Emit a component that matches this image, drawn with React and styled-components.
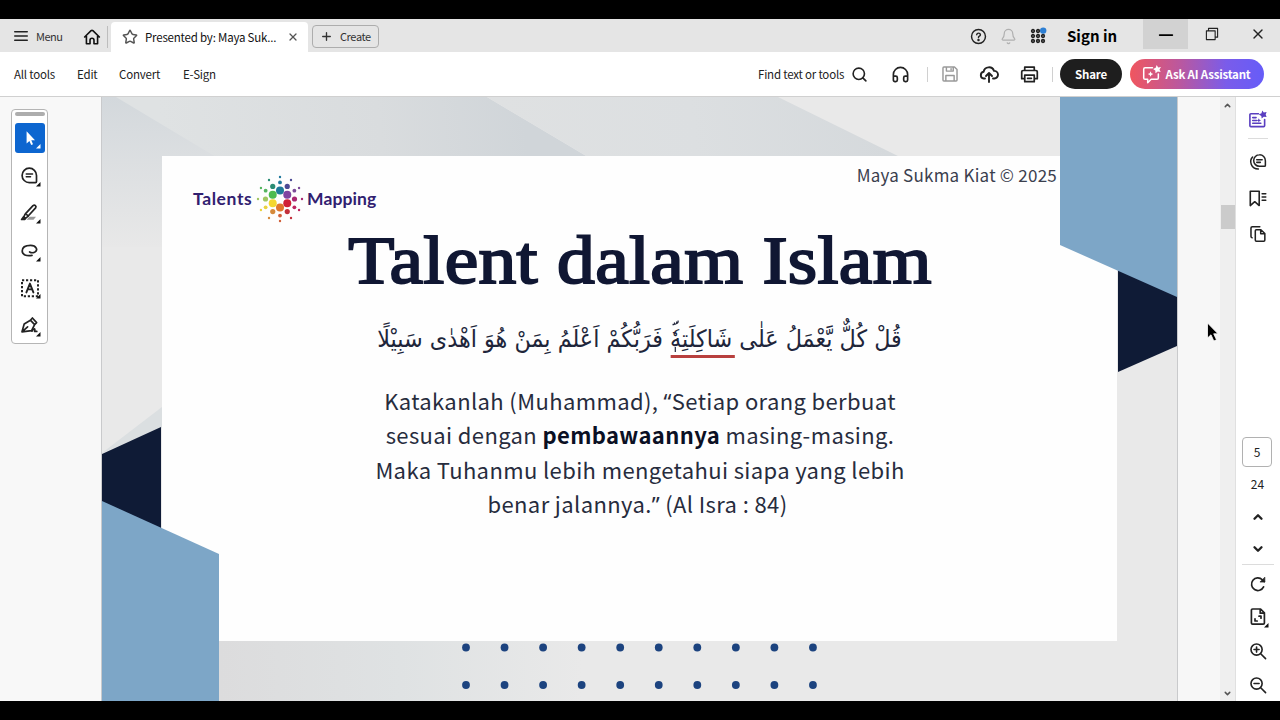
import React from 'react'
import styled, { createGlobalStyle, css } from 'styled-components'
import { Star, X, Plus, Bell, Search, Headphones, ChevronUp, ChevronDown } from 'lucide-react'

const GlobalStyle = createGlobalStyle`
    * {
        box-sizing: border-box;
    }
    body {
        margin: 0;
        background: #000;
        font-family: "Noto Sans CJK SC", "Noto Sans", sans-serif;
        color: #222;
    }
    svg {
        display: block;
        flex-shrink: 0;
        overflow: visible;
    }
`

const center = css`
    display: flex;
    align-items: center;
    justify-content: center;
`

const Screen = styled.div`
    width: 1280px;
    height: 720px;
    padding: 19px 0;
    background: #000;
    overflow: hidden;
`
const Window = styled.div`
    display: flex;
    flex-direction: column;
    height: 682px;
    background: #fff;
`
const TitleBar = styled.header`
    display: flex;
    height: 33px;
    background: #e5e5e5;
`
const MenuButton = styled.div`
    display: flex;
    align-items: center;
    gap: 8px;
    width: 80px;
    padding: 1px 0 0 14px;
    font-size: 11px;
    line-height: 16px;
    letter-spacing: -0.5px;
    color: #333;
`
const HomeButton = styled.div`
    display: flex;
    align-items: center;
    width: 28px;
    height: 22px;
    margin-top: 7px;
    padding-left: 3px;
    border-right: 1px solid #bdbdbd;
`
const DocTab = styled.div`
    display: flex;
    align-items: center;
    width: 197px;
    margin: 3px 0 0 3px;
    padding: 0 9px 0 11px;
    border-radius: 4px 4px 0 0;
    background: #fff;
`
const TabTitle = styled.div`
    flex: 1;
    margin-left: 7px;
    font-size: 11.5px;
    line-height: 18px;
    letter-spacing: -0.2px;
    white-space: nowrap;
    color: #111;
`
const CreateButton = styled.div`
    display: flex;
    align-items: center;
    gap: 7px;
    width: 67px;
    height: 23px;
    margin: 6px 0 0 4px;
    padding: 0 0 1px 7px;
    border: 1px solid #adadad;
    border-radius: 4px;
    font-size: 11px;
    line-height: 16px;
    letter-spacing: -0.4px;
    color: #333;
`
const TitleActions = styled.div`
    display: flex;
    align-items: center;
    margin-left: auto;
    padding-top: 1px;
`
const IconCell = styled.div`
    ${center};
    width: ${props => props.$width || 30}px;
    height: 100%;
`
const SignIn = styled.div`
    width: 90px;
    padding-left: 14px;
    font-size: 15px;
    font-weight: 700;
    line-height: 22px;
    color: #000;
    white-space: nowrap;
`
const WindowButton = styled.div`
    ${center};
    width: ${props => props.$width}px;
    height: 30px;
    background: ${props => (props.$active ? '#d2d2d2' : 'transparent')};
`
const Toolbar = styled.nav`
    display: flex;
    align-items: center;
    height: 45px;
    padding-left: 14px;
    border-bottom: 1px solid #d0d0d0;
    font-size: 11.5px;
    line-height: 18px;
    letter-spacing: -0.2px;
`
const ToolLink = styled.div`
    width: ${props => props.$width}px;
    white-space: nowrap;
`
const ToolbarRight = styled.div`
    display: flex;
    align-items: center;
    height: 44px;
    margin-left: auto;
    padding-right: 16px;
`
const Divider = styled.div`
    width: 1px;
    height: 15px;
    background: #d0d0d0;
`
const ShareButton = styled.div`
    ${center};
    width: 62px;
    height: 30px;
    margin-left: 7px;
    border-radius: 15px;
    background: #1e1e1e;
    color: #fff;
    font-weight: 700;
`
const AssistantButton = styled.div`
    ${center};
    gap: 5px;
    width: 134px;
    height: 30px;
    margin-left: 8px;
    padding-right: 2px;
    border-radius: 15px;
    background: linear-gradient(90deg, #f0565f 0%, #b958a0 38%, #7a5cea 72%, #665cf8 100%);
    color: #fff;
    font-weight: 700;
    white-space: nowrap;
`
const Workspace = styled.main`
    display: flex;
    height: 604px;
    background: #f7f7f7;
`
const LeftGutter = styled.aside`
    width: 102px;
    padding: 12px 0 0 11px;
    border-right: 1px solid #c9cacc;
    background: #f8f8f8;
`
const ToolPalette = styled.div`
    display: flex;
    flex-direction: column;
    align-items: center;
    width: 37px;
    height: 235px;
    border: 1px solid #b5b5b5;
    border-radius: 4px;
    background: #fff;
`
const Grip = styled.div`
    flex-shrink: 0;
    width: 30px;
    height: 4px;
    margin: 2px 0 7px;
    border-radius: 2px;
    background: #adadad;
`
const PaletteTool = styled.div`
    ${center};
    flex-shrink: 0;
    width: 30px;
    height: 30px;
    margin-bottom: 7.6px;
    border-radius: 3px;
    background: ${props => (props.$active ? '#0d66d0' : 'transparent')};
`
const Page = styled.section`
    position: relative;
    width: 1076px;
    height: 604px;
    padding: 59px 60px 0;
    overflow: hidden;
    border-right: 1px solid #c9cacc;
    background: #e9e9e9;
`
const Backdrop = styled.svg`
    position: absolute;
    top: 0;
    left: 0;
`
const Slide = styled.article`
    position: relative;
    width: 955px;
    height: 485px;
    background: #fefefe;
`
const SlideHeader = styled.div`
    display: flex;
    justify-content: space-between;
    height: 74px;
    padding: 0 60px 0 31px;
`
const Brand = styled.div`
    display: flex;
    align-items: center;
    height: 48px;
    margin-top: 19px;
    font-family: "Lato", sans-serif;
    font-size: 17.5px;
    font-weight: 700;
    line-height: 22px;
    color: #312070;
`
const BrandWord = styled.span`
    width: ${props => props.$width}px;
    padding: 0 0 1px ${props => props.$indent || 0}px;
    letter-spacing: ${props => props.$spacing}px;
    white-space: nowrap;
`
const Copyright = styled.div`
    margin-top: 6px;
    font-size: 17px;
    line-height: 26px;
    letter-spacing: 0.24px;
    color: #3b404e;
    white-space: nowrap;
`
const SlideTitle = styled.h1`
    height: 76px;
    margin: 0;
    font-family: "Liberation Serif", serif;
    font-size: 68px;
    font-weight: 400;
    line-height: 60px;
    letter-spacing: 0.3px;
    text-indent: 1px;
    text-align: center;
    white-space: nowrap;
    color: #101733;
    -webkit-text-stroke: 2px #101733;
    transform: scaleX(1.11);
`
const Verse = styled.p`
    height: 60px;
    margin: 0;
    font-family: "DejaVu Sans", sans-serif;
    font-size: 24px;
    line-height: 66px;
    text-align: center;
    white-space: nowrap;
    color: #20253a;
    transform: scaleX(0.93);
`
const Marked = styled.span`
    position: relative;
    &::after {
        content: "";
        position: absolute;
        left: 1px;
        right: -3px;
        bottom: -5px;
        height: 3px;
        background: #b8403e;
    }
`
const PauseMark = styled.svg`
    position: absolute;
    left: 0;
    bottom: 0;
`
const Translation = styled.p`
    margin: 17px 0 0;
    font-size: 22px;
    line-height: 34.3px;
    letter-spacing: 0.38px;
    text-align: center;
    color: #272c3d;
    b {
        color: #0b1024;
    }
`
const Line = styled.span`
    display: block;
    padding-left: 1px;
    padding-right: ${props => props.$inset || 0}px;
    white-space: nowrap;
`
const Quote = styled.span`
    font-family: "Noto Sans", sans-serif;
    line-height: 1;
`
const RightGutter = styled.div`
    flex: 1;
    background: #f7f7f7;
`
const ScrollTrack = styled.div`
    display: flex;
    flex-direction: column;
    align-items: center;
    width: 15px;
    padding: 4px 0 3px;
    background: #efefef;
`
const Thumb = styled.div`
    width: 14px;
    height: 24px;
    margin: 95px 0 auto;
    background: #cbcbcb;
`
const Rail = styled.aside`
    display: flex;
    flex-direction: column;
    align-items: center;
    width: 45px;
    padding: 4px 1px 0 0;
    border-left: 1px solid #e0e0e0;
    background: #fff;
    font-size: 12px;
    line-height: 18px;
`
const RailItem = styled.div`
    ${center};
    flex-shrink: 0;
    width: 100%;
    height: ${props => props.$height}px;
`
const RailDivider = styled.div`
    flex-shrink: 0;
    width: ${props => props.$width}px;
    height: 1px;
    background: #dcdcdc;
`
const PageInput = styled.div`
    ${center};
    flex-shrink: 0;
    width: 30px;
    height: 30px;
    margin: 181px 1px 0 0;
    border: 1px solid #b1b1b1;
    border-radius: 4px;
`
const Pointer = styled.svg`
    position: absolute;
    top: 322px;
    left: 1206px;
`

const Icon = ({ size = 18, width = 1.7, color = '#222', children, ...rest }) => (
    <svg width={size} height={size} viewBox="0 0 20 20" fill="none" stroke={color} strokeWidth={width} strokeLinecap="round" strokeLinejoin="round" {...rest}>
        {children}
    </svg>
)

const Corner = ({ color = '#111' }) => <path d="M20.5 16V20.5H16Z" fill={color} stroke="none" />

const MenuIcon = () => (
    <Icon size={14} width={2}><path d="M1 4h18M1 10h18M1 16h18" /></Icon>
)
const HomeIcon = () => (
    <Icon size={18} width={1.8} color="#111">
        <path d="M1.8 10 9 3Q10 2.2 11 3L18.2 10M3.8 9v8.5H7.8V13.5Q7.8 11.4 10 11.4T12.2 13.5v4H16.2V9" />
    </Icon>
)
const HelpIcon = () => (
    <Icon size={17} width={1.7}>
        <circle cx="10" cy="10" r="8.2" />
        <path d="M7.9 7.9Q8.2 6 10.1 6T12.2 7.8Q12.2 9 11 9.7T10 11.3" />
        <circle cx="10" cy="14" r=".6" fill="#222" />
    </Icon>
)
const AppsIcon = () => (
    <svg width="18" height="18" viewBox="0 0 18 18">
        {[4, 9, 14].map(y => [4, 9, 14].map(x => (
            <circle key={`${x}-${y}`} cx={x} cy={y} r="1.5" fill="#666" stroke="#222" strokeWidth="1.3" />
        )))}
        <circle cx="14.2" cy="3.6" r="3.2" fill="#2d7fd3" />
    </svg>
)
const MinimizeIcon = () => (
    <Icon size={14} width={2.6} color="#000"><path d="M1 11.5h18" /></Icon>
)
const RestoreIcon = () => (
    <Icon size={14} width={1.6}>
        <path d="M2 5.5h12.5V18H2ZM5 5V2h13v12.5h-3" />
    </Icon>
)
const SaveIcon = () => (
    <Icon size={18} width={1.6} color="#999">
        <path d="M2.2 3.2q0-1 1-1H15l2.8 2.8v11.8q0 1-1 1H3.2q-1 0-1-1ZM6 2.4v4.4h7.6V2.4M5.4 17.6v-6h9.2v6M11.2 4v1.2" />
    </Icon>
)
const CloudIcon = () => (
    <Icon size={20} width={1.9}>
        <path d="M6 14.5H4.7A3.4 3.4 0 0 1 4.6 7.8 5.4 5.4 0 0 1 15 6.9a3.8 3.8 0 0 1 .4 7.6H14M10 18V9.5M7 12l3-3 3 3" />
    </Icon>
)
const PrintIcon = () => (
    <Icon size={19} width={1.8}>
        <path d="M5 5.4V2.2h10v3.2M5 14.4H1.8V7.2q0-1.4 1.4-1.4h13.6q1.4 0 1.4 1.4v7.2H15M5 10.6h10v7H5ZM8 14h4" />
    </Icon>
)
const AssistantIcon = () => (
    <Icon size={19} width={1.6} color="#fff">
        <path d="M11 3H3.2Q1.8 3 1.8 4.4v9.2Q1.8 15 3.2 15H6v3.6L9.6 15h6.2q1.4 0 1.4-1.4V9.5" />
        <path d="m15.5 0 1.5 2.6 3-.4-1.6 2.6 1.2 2.6-3-.6-2.4 2-.2-3-2.4-1.6 2.8-1.2ZM9 6.6l.9 2 2 .9-2 .9-.9 2-.9-2-2-.9 2-.9Z" fill="#fff" stroke="none" />
    </Icon>
)
const PointerToolIcon = () => (
    <Icon size={20}>
        <path d="M6.6 3.2V15.6L9.4 13 11.2 17 13 16.2 11.3 12.3H15Z" fill="#fff" stroke="none" />
        <Corner color="#fff" />
    </Icon>
)
const CommentIcon = () => (
    <Icon size={20}>
        <path d="M9.3 2.2a7.2 7.2 0 0 1 7.2 7.2v6.2q0 1-1 1H9.3a7.2 7.2 0 0 1 0-14.4Z" />
        <path d="M6.2 8h6.4M6.2 10.8h4.4" strokeWidth="1.4" />
        <Corner />
    </Icon>
)
const HighlightIcon = () => (
    <Icon size={20}>
        <path d="M9.5 13.8h6.5l-2.5 3H6.5Z" fill="#999" stroke="none" />
        <path d="M5.6 10.6 13 2.6q1.3-1 2.4 0t.2 2.3L8.2 13Z" />
        <path d="M5 11.3 3.8 14 5.3 15.4 8 13.4" />
        <path d="M1.6 16.4l2-2.6 1.8 1.8-.8.8Z" fill="#111" />
        <Corner />
    </Icon>
)
const LassoIcon = () => (
    <Icon size={20}>
        <path d="M9.6 11Q12 12.4 14.6 11.2C18.4 9.2 16.4 4.4 10.6 4.4 5 4.4 2.2 6.8 2.2 10c0 3.6 4 5.4 9.8 4.4" />
        <Corner />
    </Icon>
)
const TextBoxIcon = () => (
    <Icon size={20}>
        <path d="M2 2.2h16v16H2Z" strokeDasharray="2.2 1.8" strokeLinecap="butt" strokeWidth="2" />
        <path d="m6.4 14.4 3.5-8.8L13.4 14.4M7.8 11.4h4.2" strokeWidth="1.9" />
        <Corner />
    </Icon>
)
const SignIcon = () => (
    <Icon size={20}>
        <path d="M2 15.8 4.2 8 10.4 4.2 14.6 8.6 11.6 14.6ZM2 15.8l5.6-5M10.4 4.2 12.4 2l4.2 4.6-2 2" />
        <path d="M12 15.2q1.2-2.4 2.2-2.4t.4 2.6h2.2" />
        <Corner />
    </Icon>
)
const AiPanelIcon = () => (
    <Icon size={19} color="#5a3fc0">
        <path d="M11 4H3Q2 4 2 5v11.5q0 1 1 1h13.5q1 0 1-1V10" />
        <path d="M5 8h3.5M5 11h4M5 14h8.5" />
        <path d="m15 .6 1.6 2 3-.6-1 2.8 1 2.6-3-.4-2.2 2-.4-2.8-2.6-1.4 2.8-1.4ZM11.4 8.6l.7 1.7 1.7.7-1.7.7-.7 1.7-.7-1.7-1.7-.7 1.7-.7Z" fill="#5a3fc0" stroke="none" />
    </Icon>
)
const CommentsPanelIcon = () => (
    <Icon size={18}>
        <path d="M11.6 2a6.4 6.4 0 0 1 6.6 6.6v5.2q0 1-1 1h-5.6a6.4 6.4 0 0 1 0-12.8ZM8.6 7.4h6M8.6 10.4h4" />
        <path d="M4 4.5C-.2 9 2.2 17.5 10.4 17.8" />
    </Icon>
)
const BookmarkIcon = () => (
    <Icon size={19}>
        <path d="M2.4 2.4h9.4v15L7.1 13.4l-4.7 4Z" />
        <path d="M14.8 5h4M14.8 8.4h4M14.8 11.8h4" strokeWidth="1.4" />
    </Icon>
)
const PagesIcon = () => (
    <Icon size={18}>
        <path d="M8.2 5.2h5L17.6 9.4v7.4q0 1.2-1.2 1.2H8.2Q7 18 7 16.8V6.4Q7 5.2 8.2 5.2ZM13 5.4v4.2h4.4" />
        <path d="M3.4 14.2Q2.2 14 2.2 12.8V3.4q0-1.4 1.4-1.4H12" />
    </Icon>
)
const RotateIcon = () => (
    <Icon size={18} width={1.9}>
        <path d="M16.2 13.2A7 7 0 1 1 14.8 5.3L17 7.4" />
        <path d="M17.6 2.8v5h-5Z" fill="#222" strokeWidth=".8" />
    </Icon>
)
const FitPageIcon = () => (
    <Icon size={20}>
        <path d="M4.6 2h8L16.4 5.8V16q0 1.2-1.2 1.2H4.6Q3.4 17.2 3.4 16V3.2Q3.4 2 4.6 2ZM12.2 2.2v4h4M11 9.2h2v2M7 11.8v2.2h2.2" />
        <Corner />
    </Icon>
)
const ZoomIcon = ({ plus }) => (
    <Icon size={18} width={1.8}>
        <circle cx="8.4" cy="8.4" r="6.2" />
        <path d="M13 13l5.4 5.4M5.6 8.4h5.6" />
        {plus && <path d="M8.4 5.6v5.6" />}
    </Icon>
)

const innerColors = ['#1d7a9a', '#7f45a0', '#d02038', '#e0762c', '#f4d72e', '#4dbb50']
// clockwise from twelve o'clock, 30 degrees apart
const outerColors = ['#20789c', '#4c4a94', '#7b4a98', '#a82872', '#bd2560', '#c3303c', '#d0603a', '#d58a3c', '#ead23e', '#a0c661', '#55b560', '#2a8c74']

const polar = (deg, r) => ({
    cx: 24 + r * Math.sin((deg * Math.PI) / 180),
    cy: 24 - r * Math.cos((deg * Math.PI) / 180),
})

const BrandMark = () => (
    <svg width="48" height="48" viewBox="0 0 48 48">
        {innerColors.map((color, i) => <circle key={color} {...polar(i * 60, 8.4)} r="4" fill={color} />)}
        {outerColors.map((color, i) => (
            <React.Fragment key={color}>
                <circle {...polar(i * 30, i % 2 ? 14.5 : 16.6)} r={i % 2 ? 2.6 : 1.9} fill={color} />
                <circle {...polar(i * 30, 22)} r="1.2" fill={color} />
            </React.Fragment>
        ))}
    </svg>
)

const PageBackdrop = () => (
    <Backdrop width="1076" height="604" viewBox="0 0 1076 604">
        <defs>
            <linearGradient id="beamA" x1="0" y1="0" x2="0" y2="1">
                <stop offset="0" stopColor="#d3d8dc" />
                <stop offset="1" stopColor="#e8e8e8" />
            </linearGradient>
            <linearGradient id="beamB" gradientUnits="userSpaceOnUse" x1="60" y1="40" x2="420" y2="0">
                <stop offset="0" stopColor="#dfe2e3" />
                <stop offset=".6" stopColor="#d9dcde" />
                <stop offset="1" stopColor="#d0d5d9" />
            </linearGradient>
            <linearGradient id="beamC" gradientUnits="userSpaceOnUse" x1="400" y1="40" x2="780" y2="0">
                <stop offset="0" stopColor="#dfe1e2" />
                <stop offset=".5" stopColor="#dcdfe1" />
                <stop offset="1" stopColor="#d5d9dc" />
            </linearGradient>
            <linearGradient id="beamD" x1="0" y1="0" x2="1" y2="0">
                <stop offset="0" stopColor="#dcdcdd" />
                <stop offset=".5" stopColor="#dfe2e3" />
                <stop offset="1" stopColor="#e9e9e9" />
            </linearGradient>
        </defs>
        <path d="M0 0H16L120 60V150H0Z" fill="url(#beamA)" />
        <path d="M14 0H385L486 60H114Z" fill="url(#beamB)" />
        <path d="M385 0H676L798 60H486Z" fill="url(#beamC)" />
        <path d="M0 356 60 310V331Z" fill="#dbdfe1" />
        <path d="M117 544H480V604H117Z" fill="url(#beamD)" />
    </Backdrop>
)

const PageShapes = () => (
    <Backdrop width="1076" height="604" viewBox="0 0 1076 604">
        <path d="M0 357 59 330V440H0Z" fill="#0f1b36" />
        <path d="M0 404 117 457V604H0Z" fill="#7da6c7" />
        <path d="M1016 170 1075 190V249L1016 275Z" fill="#0f1b36" />
        <path d="M958 0H1075V200L958 148Z" fill="#7da6c7" />
        {[550.5, 588].map(y => Array.from({ length: 10 }, (_, i) => (
            <circle key={`${i}-${y}`} cx={364 + i * 38.55} cy={y} r="3.9" fill="#1c437f" />
        )))}
    </Backdrop>
)

const SlideContent = () => (
    <Slide>
        <SlideHeader>
            <Brand>
                <BrandWord $width={63} $spacing={0.6}>Talents</BrandWord>
                <BrandMark />
                <BrandWord $width={75} $indent={3} $spacing={0.1}>Mapping</BrandWord>
            </Brand>
            <Copyright>Maya Sukma Kiat © 2025</Copyright>
        </SlideHeader>
        <SlideTitle>Talent dalam Islam</SlideTitle>
        <Verse dir="rtl" lang="ar">
            قُلْ كُلٌّ يَّعْمَلُ عَلٰى{' '}
            <Marked>
                شَاكِلَتِهٗ
                <PauseMark width="12" height="34" viewBox="0 0 12 34" fill="none" stroke="#20253a" strokeWidth="1.3">
                    <path d="M6 28v5M3 5.5q2.5.5 2-2M5 5q3 .5 2.5-2.5M7 4.5q2.5 0 2-3" />
                </PauseMark>
            </Marked>
            {' '}فَرَبُّكُمْ اَعْلَمُ بِمَنْ هُوَ اَهْدٰى سَبِيْلًا
        </Verse>
        <Translation>
            <Line>Katakanlah (Muhammad), <Quote>“</Quote>Setiap orang berbuat</Line>
            <Line>sesuai dengan <b>pembawaannya</b> masing-masing.</Line>
            <Line>Maka Tuhanmu lebih mengetahui siapa yang lebih</Line>
            <Line $inset={5}>benar jalannya.<Quote>”</Quote> (Al Isra : 84)</Line>
        </Translation>
    </Slide>
)

const paletteTools = [CommentIcon, HighlightIcon, LassoIcon, TextBoxIcon, SignIcon]

export default function App() {
    return (
        <Screen>
            <GlobalStyle />
            <Window>
                <TitleBar>
                    <MenuButton><MenuIcon />Menu</MenuButton>
                    <HomeButton><HomeIcon /></HomeButton>
                    <DocTab>
                        <Star size={16} strokeWidth={2.2} color="#555" />
                        <TabTitle>Presented by: Maya Suk...</TabTitle>
                        <X size={12} strokeWidth={2.6} color="#555" />
                    </DocTab>
                    <CreateButton><Plus size={13} strokeWidth={2.5} />Create</CreateButton>
                    <TitleActions>
                        <IconCell><HelpIcon /></IconCell>
                        <IconCell><Bell size={17} strokeWidth={1.7} color="#b0b0b0" /></IconCell>
                        <IconCell><AppsIcon /></IconCell>
                        <SignIn>Sign in</SignIn>
                    </TitleActions>
                    <WindowButton $width={45} $active><MinimizeIcon /></WindowButton>
                    <WindowButton $width={47}><RestoreIcon /></WindowButton>
                    <WindowButton $width={45}><X size={16} strokeWidth={2} color="#222" /></WindowButton>
                </TitleBar>
                <Toolbar>
                    <ToolLink $width={63}>All tools</ToolLink>
                    <ToolLink $width={42}>Edit</ToolLink>
                    <ToolLink $width={64}>Convert</ToolLink>
                    <ToolLink $width={50}>E-Sign</ToolLink>
                    <ToolbarRight>
                        <ToolLink $width={86}>Find text or tools</ToolLink>
                        <IconCell $width={30}><Search size={17} strokeWidth={2.3} /></IconCell>
                        <IconCell $width={53}><Headphones size={19} strokeWidth={2.1} /></IconCell>
                        <Divider />
                        <IconCell $width={44}><SaveIcon /></IconCell>
                        <IconCell $width={34}><CloudIcon /></IconCell>
                        <IconCell $width={46}><PrintIcon /></IconCell>
                        <Divider />
                        <ShareButton>Share</ShareButton>
                        <AssistantButton><AssistantIcon />Ask AI Assistant</AssistantButton>
                    </ToolbarRight>
                </Toolbar>
                <Workspace>
                    <LeftGutter>
                        <ToolPalette>
                            <Grip />
                            <PaletteTool $active><PointerToolIcon /></PaletteTool>
                            {paletteTools.map((Tool, i) => <PaletteTool key={i}><Tool /></PaletteTool>)}
                        </ToolPalette>
                    </LeftGutter>
                    <Page>
                        <PageBackdrop />
                        <SlideContent />
                        <PageShapes />
                    </Page>
                    <RightGutter />
                    <ScrollTrack>
                        <ChevronUp size={9} strokeWidth={4} color="#555" />
                        <Thumb />
                        <ChevronDown size={9} strokeWidth={4} color="#555" />
                    </ScrollTrack>
                    <Rail>
                        <RailItem $height={37}><AiPanelIcon /></RailItem>
                        <RailDivider $width={20} />
                        <RailItem $height={46}><CommentsPanelIcon /></RailItem>
                        <RailItem $height={27}><BookmarkIcon /></RailItem>
                        <RailItem $height={44}><PagesIcon /></RailItem>
                        <PageInput>5</PageInput>
                        <RailItem $height={33}>24</RailItem>
                        <RailItem $height={34}><ChevronUp size={14} strokeWidth={4} /></RailItem>
                        <RailItem $height={30}><ChevronDown size={14} strokeWidth={4} /></RailItem>
                        <RailDivider $width={32} />
                        <RailItem $height={37}><RotateIcon /></RailItem>
                        <RailItem $height={30}><FitPageIcon /></RailItem>
                        <RailItem $height={37}><ZoomIcon plus /></RailItem>
                        <RailItem $height={31}><ZoomIcon /></RailItem>
                    </Rail>
                </Workspace>
            </Window>
            <Pointer width="14" height="22" viewBox="0 0 14 22">
                <path d="M1.5 1V16L5 12.8 7.8 19 10.5 17.8 7.7 11.8H12Z" fill="#000" stroke="#fff" strokeWidth=".8" />
            </Pointer>
        </Screen>
    )
}
